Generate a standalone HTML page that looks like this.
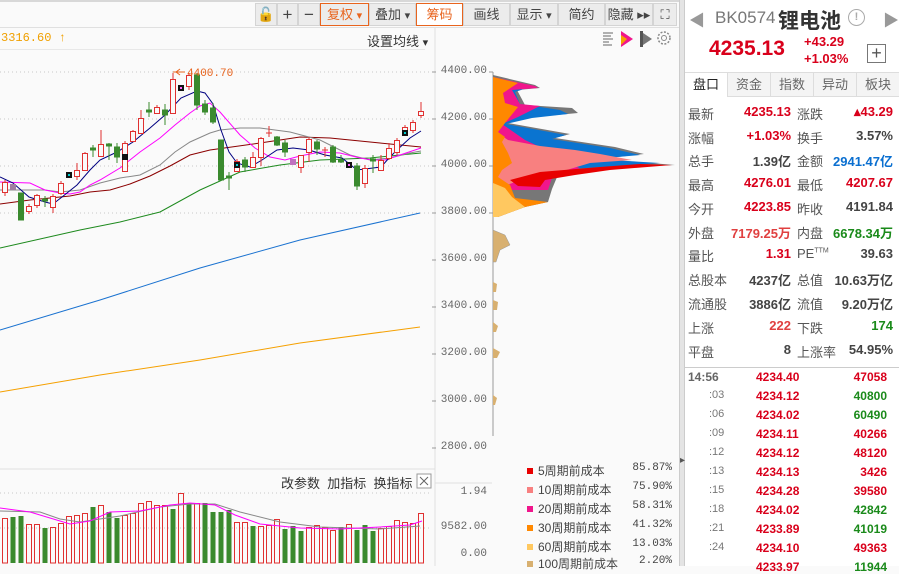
<!DOCTYPE html>
<html><head><meta charset="utf-8"><style>
*{margin:0;padding:0;box-sizing:border-box}
body{width:899px;height:566px;overflow:hidden;background:#fafafa;font-family:"Liberation Sans","Noto Sans CJK SC",sans-serif;position:relative}
.a{position:absolute;white-space:nowrap}
.btn{position:absolute;top:3px;height:23px;background:#ececec;border:1px solid #d4d4d4;font-size:13px;color:#444;text-align:center;line-height:21px}
.or{border:1px solid #e8641e}
.lab{position:absolute;font-size:13px;color:#555}
.val{position:absolute;font-size:13px;font-weight:bold;text-align:right}
.r{color:#d9001b}.g{color:#1a8a1a}.k{color:#444}.b{color:#0a6fd0}
.ax{position:absolute;font-family:"Liberation Mono",monospace;font-size:11px;color:#666;text-align:right;width:52px;left:435px}
.tk{position:absolute;font-size:12px;font-weight:bold}
.leg{position:absolute;left:527px;font-size:12px;color:#444;width:145px}
.leg i{display:inline-block;width:6px;height:6px;margin:0 5px 1px 0}
.leg span{position:absolute;right:0;font-family:"Liberation Mono",monospace;font-size:11px}
</style></head><body>
<div class="a" style="left:0;top:0;width:680px;height:2px;background:#d8d8d8"></div>
<div class="a" style="left:0;top:27px;width:680px;height:1px;background:#e0e0e0"></div>
<div class="btn" style="left:255px;width:22px;font-size:14px">&#128275;</div>
<div class="btn" style="left:277px;width:21px;font-size:17px">+</div>
<div class="btn" style="left:298px;width:22px;font-size:17px">−</div>
<div class="btn or" style="left:320px;width:49px;color:#e8641e">复权 <small>▾</small></div>
<div class="btn" style="left:369px;width:47px">叠加 <small>▾</small></div>
<div class="btn or" style="left:416px;width:47px;color:#e8641e;background:#fff">筹码</div>
<div class="btn" style="left:463px;width:47px">画线</div>
<div class="btn" style="left:510px;width:48px">显示 <small>▾</small></div>
<div class="btn" style="left:558px;width:47px">简约</div>
<div class="btn" style="left:605px;width:48px">隐藏 ▸▸</div>
<div class="btn" style="left:653px;width:24px">⛶</div>

<div class="a" style="left:1px;top:31px;font-size:12px;color:#f0a000;font-family:'Liberation Mono',monospace">3316.60 ↑</div>
<div class="a" style="left:367px;top:31px;font-size:13px;color:#333">设置均线 <small>▾</small></div>
<div class="a" style="left:0;top:49px;width:425px;height:1px;background:#e8e8e8"></div>

<svg class="a" style="left:0;top:0" width="680" height="566">
<g stroke="#c8c8c8" stroke-dasharray="1,3">
<line x1="0" y1="72" x2="432" y2="72"/><line x1="0" y1="119" x2="432" y2="119"/><line x1="0" y1="166" x2="432" y2="166"/><line x1="0" y1="213" x2="432" y2="213"/>
<line x1="0" y1="493" x2="432" y2="493"/><line x1="0" y1="528" x2="432" y2="528"/></g>
<line x1="435" y1="28" x2="435" y2="566" stroke="#e0e0e0"/>
<line x1="0" y1="469" x2="435" y2="469" stroke="#e0e0e0"/>
<line x1="435" y1="483" x2="492" y2="483" stroke="#e0e0e0"/>
<g stroke="#999"><line x1="432" y1="72" x2="436" y2="72"/><line x1="432" y1="119" x2="436" y2="119"/><line x1="432" y1="166" x2="436" y2="166"/><line x1="432" y1="213" x2="436" y2="213"/><line x1="432" y1="260" x2="436" y2="260"/><line x1="432" y1="307" x2="436" y2="307"/><line x1="432" y1="354" x2="436" y2="354"/><line x1="432" y1="401" x2="436" y2="401"/><line x1="432" y1="448" x2="436" y2="448"/></g>
<g fill="none" stroke-width="1">
<polyline stroke="#f5a000" points="0,392 100,375 200,360 300,343 420,327"/>
<polyline stroke="#1a72d0" points="0,330 100,300 200,268 300,240 420,213"/>
<polyline stroke="#1e8a1e" points="0,248 80,230 120,222 160,212 200,190 240,172 280,165 320,160 370,158 400,155 421,153"/>
<polyline stroke="#8b0000" points="0,204 30,200 50,198 70,196 90,192 110,190 130,184 150,176 170,166 190,155 210,150 260,143 300,137 330,138 380,143 421,147"/>
<polyline stroke="#888" points="0,190 45,190 60,192 80,190 100,183 120,178 140,175 160,165 175,152 190,142 210,133 220,130 240,128 260,128 290,132 320,140 350,155 370,160 390,158 410,153 421,151"/>
<polyline stroke="#f0f" points="0,182 30,183 45,190 60,193 70,194 80,192 90,185 100,180 120,168 140,152 160,138 175,125 190,113 200,106 210,103 220,112 240,135 255,148 270,157 285,160 300,156 320,152 340,153 360,158 372,160 385,160 400,155 421,148"/>
<polyline stroke="#000080" points="0,177 13,183 29,197 45,202 53,204 62,197 77,185 90,170 100,160 117,152 133,142 150,128 165,115 181,98 197,91 205,93 213,104 221,130 229,152 237,163 250,167 262,160 277,150 293,148 309,150 325,155 342,158 357,170 373,168 381,167 389,158 397,150 410,138 421,131"/>
</g>
<g stroke="#e03030" fill="none">
<line x1="5" y1="180" x2="5" y2="196"/><rect x="2.5" y="182.5" width="5" height="10" fill="#fafafa"/>
<line x1="29" y1="204" x2="29" y2="214"/><rect x="26.5" y="206.5" width="5" height="5" fill="#fafafa"/>
<line x1="37" y1="194" x2="37" y2="208"/><rect x="34.5" y="195.5" width="5" height="10" fill="#fafafa"/>
<line x1="53" y1="194" x2="53" y2="213"/><rect x="50.5" y="196.5" width="5" height="11" fill="#fafafa"/>
<line x1="61" y1="181" x2="61" y2="195"/><rect x="58.5" y="183.5" width="5" height="10" fill="#fafafa"/>
<line x1="77" y1="163" x2="77" y2="180"/><rect x="74.5" y="170.5" width="5" height="6" fill="#fafafa"/>
<line x1="85" y1="152" x2="85" y2="170"/><rect x="82.5" y="153.5" width="5" height="17" fill="#fafafa"/>
<line x1="101" y1="130" x2="101" y2="157"/><rect x="98.5" y="144.5" width="5" height="12" fill="#fafafa"/>
<line x1="125" y1="141" x2="125" y2="171"/><rect x="122.5" y="143.5" width="5" height="28" fill="#fafafa"/>
<line x1="133" y1="130" x2="133" y2="142"/><rect x="130.5" y="131.5" width="5" height="10" fill="#fafafa"/>
<line x1="141" y1="110" x2="141" y2="133"/><rect x="138.5" y="118.5" width="5" height="15" fill="#fafafa"/>
<line x1="157" y1="105" x2="157" y2="113"/><rect x="154.5" y="107.5" width="5" height="6" fill="#fafafa"/>
<line x1="173" y1="73" x2="173" y2="113"/><rect x="170.5" y="79.5" width="5" height="34" fill="#fafafa"/>
<line x1="189" y1="73" x2="189" y2="90"/><rect x="186.5" y="75.5" width="5" height="11" fill="#fafafa"/>
<line x1="237" y1="159" x2="237" y2="171"/><rect x="234.5" y="161.5" width="5" height="10" fill="#fafafa"/>
<line x1="253" y1="152" x2="253" y2="168"/><rect x="250.5" y="157.5" width="5" height="10" fill="#fafafa"/>
<line x1="261" y1="137" x2="261" y2="166"/><rect x="258.5" y="138.5" width="5" height="19" fill="#fafafa"/>
<line x1="269" y1="126" x2="269" y2="137"/><line x1="266" y1="133" x2="272" y2="133"/>
<line x1="301" y1="155" x2="301" y2="173"/><rect x="298.5" y="155.5" width="5" height="12" fill="#fafafa"/>
<line x1="309" y1="137" x2="309" y2="162"/><rect x="306.5" y="139.5" width="5" height="13" fill="#fafafa"/>
<line x1="325" y1="147" x2="325" y2="157"/><line x1="322" y1="150" x2="328" y2="150"/>
<line x1="365" y1="165" x2="365" y2="188"/><rect x="362.5" y="168.5" width="5" height="15" fill="#fafafa"/>
<line x1="381" y1="155" x2="381" y2="171"/><rect x="378.5" y="160.5" width="5" height="10" fill="#fafafa"/>
<line x1="389" y1="143" x2="389" y2="160"/><rect x="386.5" y="148.5" width="5" height="10" fill="#fafafa"/>
<line x1="397" y1="138" x2="397" y2="155"/><rect x="394.5" y="140.5" width="5" height="12" fill="#fafafa"/>
<line x1="405" y1="125" x2="405" y2="136"/><rect x="402.5" y="127.5" width="5" height="8" fill="#fafafa"/>
<line x1="413" y1="120" x2="413" y2="133"/><rect x="410.5" y="122.5" width="5" height="8" fill="#fafafa"/>
<line x1="421" y1="102" x2="421" y2="118"/><rect x="418.5" y="111.5" width="5" height="4" fill="#fafafa"/>
</g>
<g stroke="#3a8a2e" fill="#3a8a2e">
<rect x="18.5" y="193" width="5" height="27"/>
<line x1="45" y1="196" x2="45" y2="207"/><rect x="42.5" y="199" width="5" height="2"/>
<line x1="93" y1="145" x2="93" y2="157"/><rect x="90.5" y="148" width="5" height="2"/>
<line x1="109" y1="143" x2="109" y2="160"/><rect x="106.5" y="144" width="5" height="2"/>
<line x1="117" y1="143" x2="117" y2="163"/><rect x="114.5" y="147" width="5" height="10"/>
<line x1="149" y1="102" x2="149" y2="117"/><rect x="146.5" y="110" width="5" height="2"/>
<line x1="165" y1="104" x2="165" y2="125"/><rect x="162.5" y="110" width="5" height="5"/>
<line x1="197" y1="73" x2="197" y2="110"/><rect x="194.5" y="75" width="5" height="30"/>
<line x1="205" y1="100" x2="205" y2="115"/><rect x="202.5" y="104" width="5" height="8"/>
<line x1="213" y1="103" x2="213" y2="124"/><rect x="210.5" y="108" width="5" height="14"/>
<rect x="218.5" y="140" width="5" height="40"/>
<line x1="229" y1="172" x2="229" y2="190"/><rect x="226.5" y="176" width="5" height="2"/>
<line x1="245" y1="157" x2="245" y2="172"/><rect x="242.5" y="160" width="5" height="7"/>
<line x1="277" y1="136" x2="277" y2="146"/><rect x="274.5" y="137" width="5" height="8"/>
<line x1="285" y1="140" x2="285" y2="157"/><rect x="282.5" y="143" width="5" height="9"/>
<line x1="317" y1="140" x2="317" y2="155"/><rect x="314.5" y="142" width="5" height="7"/>
<line x1="333" y1="145" x2="333" y2="163"/><rect x="330.5" y="147" width="5" height="15"/>
<line x1="341" y1="155" x2="341" y2="163"/><rect x="338.5" y="160" width="5" height="2"/>
<line x1="357" y1="163" x2="357" y2="190"/><rect x="354.5" y="166" width="5" height="20"/>
<line x1="373" y1="155" x2="373" y2="173"/><rect x="370.5" y="159" width="5" height="2"/>
</g>
<rect x="10" y="184" width="6" height="6" fill="#a080a0"/>
<rect x="66" y="172" width="6" height="6" fill="#111"/><rect x="68" y="174" width="2" height="2" fill="#0cc"/>
<rect x="122" y="154" width="6" height="6" fill="#111"/>
<rect x="178" y="85" width="6" height="6" fill="#111"/><rect x="180" y="87" width="2" height="2" fill="#f6f"/>
<rect x="234" y="162" width="6" height="6" fill="#111"/><rect x="236" y="164" width="2" height="2" fill="#0cc"/>
<rect x="290" y="159" width="6" height="6" fill="#c070c0"/>
<rect x="346" y="162" width="6" height="6" fill="#111"/><rect x="348" y="164" width="2" height="2" fill="#f6f"/>
<rect x="402" y="130" width="6" height="6" fill="#111"/><rect x="404" y="132" width="2" height="2" fill="#0cc"/>
<line x1="173" y1="72" x2="185" y2="72" stroke="#e8641e"/><path d="M180,69 L176,72 L180,75" fill="none" stroke="#e8641e"/>
<text x="187" y="76" font-family="Liberation Mono,monospace" font-size="11" fill="#e8641e">4400.70</text>
<!-- volume -->
<g>
<rect x="2.5" y="518.5" width="5" height="44.5" fill="none" stroke="#e03030"/><rect x="10.5" y="517" width="5" height="46" fill="#3a8a2e"/><rect x="18.5" y="516" width="5" height="47" fill="#3a8a2e"/><rect x="26.5" y="524.5" width="5" height="38.5" fill="none" stroke="#e03030"/><rect x="34.5" y="524.5" width="5" height="38.5" fill="none" stroke="#e03030"/><rect x="42.5" y="528" width="5" height="35" fill="#3a8a2e"/><rect x="50.5" y="527.5" width="5" height="35.5" fill="none" stroke="#e03030"/><rect x="58.5" y="523.5" width="5" height="39.5" fill="none" stroke="#e03030"/><rect x="66.5" y="516.5" width="5" height="46.5" fill="none" stroke="#e03030"/><rect x="74.5" y="515.5" width="5" height="47.5" fill="none" stroke="#e03030"/><rect x="82.5" y="513.5" width="5" height="49.5" fill="none" stroke="#e03030"/><rect x="90.5" y="507" width="5" height="56" fill="#3a8a2e"/><rect x="98.5" y="505.5" width="5" height="57.5" fill="none" stroke="#e03030"/><rect x="106.5" y="512" width="5" height="51" fill="#3a8a2e"/><rect x="114.5" y="518" width="5" height="45" fill="#3a8a2e"/><rect x="122.5" y="515.5" width="5" height="47.5" fill="none" stroke="#e03030"/><rect x="130.5" y="513.5" width="5" height="49.5" fill="none" stroke="#e03030"/><rect x="138.5" y="503.5" width="5" height="59.5" fill="none" stroke="#e03030"/><rect x="146.5" y="501.5" width="5" height="61.5" fill="none" stroke="#e03030"/><rect x="154.5" y="505.5" width="5" height="57.5" fill="none" stroke="#e03030"/><rect x="162.5" y="505.5" width="5" height="57.5" fill="none" stroke="#e03030"/><rect x="170.5" y="509" width="5" height="54" fill="#3a8a2e"/><rect x="170.5" y="493.5" width="5" height="69.5" fill="none" stroke="#e03030" transform="translate(8 0)"/><rect x="186.5" y="503" width="5" height="60" fill="#3a8a2e"/><rect x="194.5" y="503.5" width="5" height="59.5" fill="none" stroke="#e03030"/><rect x="202.5" y="503" width="5" height="60" fill="#3a8a2e"/><rect x="210.5" y="512" width="5" height="51" fill="#3a8a2e"/><rect x="218.5" y="512" width="5" height="51" fill="#3a8a2e"/><rect x="226.5" y="510" width="5" height="53" fill="#3a8a2e"/><rect x="234.5" y="522.5" width="5" height="40.5" fill="none" stroke="#e03030"/><rect x="242.5" y="522.5" width="5" height="40.5" fill="none" stroke="#e03030"/><rect x="250.5" y="526" width="5" height="37" fill="#3a8a2e"/><rect x="258.5" y="526.5" width="5" height="36.5" fill="none" stroke="#e03030"/><rect x="266.5" y="525.5" width="5" height="37.5" fill="none" stroke="#e03030"/><rect x="274.5" y="519.5" width="5" height="43.5" fill="none" stroke="#e03030"/><rect x="282.5" y="529" width="5" height="34" fill="#3a8a2e"/><rect x="290.5" y="526" width="5" height="37" fill="#3a8a2e"/><rect x="298.5" y="531" width="5" height="32" fill="#3a8a2e"/><rect x="306.5" y="527.5" width="5" height="35.5" fill="none" stroke="#e03030"/><rect x="314.5" y="525.5" width="5" height="37.5" fill="none" stroke="#e03030"/><rect x="322.5" y="527.5" width="5" height="35.5" fill="none" stroke="#e03030"/><rect x="330.5" y="530.5" width="5" height="32.5" fill="none" stroke="#e03030"/><rect x="338.5" y="527" width="5" height="36" fill="#3a8a2e"/><rect x="346.5" y="524.5" width="5" height="38.5" fill="none" stroke="#e03030"/><rect x="354.5" y="530" width="5" height="33" fill="#3a8a2e"/><rect x="362.5" y="525" width="5" height="38" fill="#3a8a2e"/><rect x="370.5" y="531" width="5" height="32" fill="#3a8a2e"/><rect x="378.5" y="528.5" width="5" height="34.5" fill="none" stroke="#e03030"/><rect x="386.5" y="526.5" width="5" height="36.5" fill="none" stroke="#e03030"/><rect x="394.5" y="520.5" width="5" height="42.5" fill="none" stroke="#e03030"/><rect x="402.5" y="522.5" width="5" height="40.5" fill="none" stroke="#e03030"/><rect x="410.5" y="523.5" width="5" height="39.5" fill="none" stroke="#e03030"/><rect x="418.5" y="513.5" width="5" height="49.5" fill="none" stroke="#e03030"/>
</g>
<polyline fill="none" stroke="#888" points="0,511 40,512 60,519 80,522 120,516 160,507 190,504 215,504 240,512 280,522 320,527 380,529 420,526"/>
<polyline fill="none" stroke="#f0f" points="0,508 30,512 60,521 70,524 90,521 110,512 140,511 170,505 190,503 215,505 235,515 260,524 300,528 340,529 380,527 410,525 422,521"/>
<!-- chip distribution -->
<line x1="493" y1="72" x2="493" y2="436" stroke="#999"/>
<line x1="489" y1="72" x2="493" y2="72" stroke="#999"/><line x1="489" y1="119" x2="493" y2="119" stroke="#999"/><line x1="489" y1="166" x2="493" y2="166" stroke="#999"/><line x1="489" y1="213" x2="493" y2="213" stroke="#999"/>
<polygon fill="#777" points="493,75 535,85 540,88 517,90 525,105 572,108 578,113 535,117 508,123 570,134 555,138 615,147 644,154 600,159 675,165 560,170 552,189 548,202 525,207 498,217 493,217"/>
<polygon fill="#0a74d0" points="493,78 530,87 515,92 520,104 560,110 568,114 532,118 506,124 566,135 552,139 610,148 640,155 595,159 660,163 555,170 548,189 493,189"/>
<polygon fill="#f0168c" points="493,77 535,86 538,88 512,90 520,104 540,106 518,117 502,124 525,140 540,147 520,152 550,158 580,168 552,178 548,190 493,190"/>
<polygon fill="#f88080" points="493,130 508,140 540,146 575,150 600,154 632,160 590,163 560,172 520,180 500,188 493,190"/>
<polygon fill="#e80000" points="510,180 540,172 600,167 640,164 672,165 610,170 575,175 545,180 540,187 518,186"/>
<polygon fill="#ff8800" points="493,77 518,83 503,93 505,103 518,107 505,123 498,132 505,137 502,142 508,153 512,163 502,170 498,177 510,185 515,198 548,202 525,207 498,217 493,217"/>
<polygon fill="#ffc860" points="493,183 505,188 512,197 525,207 498,217 493,217"/>
<polygon fill="#d8b070" stroke="#999" stroke-width=".5" points="493,230 505,235 510,245 500,250 496,262 493,262"/>
<polygon fill="#d8b070" points="493,282 497,284 496,292 493,292"/>
<polygon fill="#d8b070" points="493,300 498,302 497,310 493,310"/>
<polygon fill="#d8b070" points="493,322 498,326 496,332 493,332"/>
<polygon fill="#d8b070" points="493,348 500,352 497,358 493,358"/>
<polygon fill="#d8b070" points="493,395 497,398 495,405 493,405"/>
<!-- icons -->
<g stroke="#666"><line x1="603" y1="33" x2="613" y2="33"/><line x1="603" y1="36" x2="611" y2="36"/><line x1="603" y1="39" x2="613" y2="39"/><line x1="603" y1="42" x2="609" y2="42"/><line x1="603" y1="45" x2="612" y2="45"/></g>
<polygon points="621,31 633,39 621,47" fill="#f0168c"/><polygon points="621,35 627,39 621,45" fill="#f5a000"/>
<polygon points="640,31 652,39 640,47" fill="#777"/><rect x="640" y="31" width="3" height="16" fill="#555"/>
<circle cx="664" cy="38" r="6" fill="none" stroke="#888" stroke-width="1.5" stroke-dasharray="2,1.5"/><circle cx="664" cy="38" r="2.5" fill="none" stroke="#888"/>
<rect x="417" y="474" width="14" height="14" fill="#fff" stroke="#999"/><path d="M420,477 L428,485 M428,477 L420,485" stroke="#666"/>
</svg>

<div class="ax" style="top:65px">4400.00</div><div class="ax" style="top:112px">4200.00</div><div class="ax" style="top:159px">4000.00</div><div class="ax" style="top:206px">3800.00</div><div class="ax" style="top:253px">3600.00</div><div class="ax" style="top:300px">3400.00</div><div class="ax" style="top:347px">3200.00</div><div class="ax" style="top:394px">3000.00</div><div class="ax" style="top:441px">2800.00</div>
<div class="ax" style="top:486px">1.94</div><div class="ax" style="top:521px">9582.00</div><div class="ax" style="top:548px">0.00</div>
<div class="a" style="left:281px;top:473px;font-size:13px;color:#333">改参数&nbsp; 加指标&nbsp; 换指标</div>

<div class="leg" style="top:462px"><i style="background:#e80000"></i>5周期前成本<span>85.87%</span></div>
<div class="leg" style="top:481px"><i style="background:#f88080"></i>10周期前成本<span>75.90%</span></div>
<div class="leg" style="top:500px"><i style="background:#f0168c"></i>20周期前成本<span>58.31%</span></div>
<div class="leg" style="top:519px"><i style="background:#ff8800"></i>30周期前成本<span>41.32%</span></div>
<div class="leg" style="top:538px"><i style="background:#ffc860"></i>60周期前成本<span>13.03%</span></div>
<div class="leg" style="top:555px"><i style="background:#d8b070"></i>100周期前成本<span>2.20%</span></div>

<!-- splitter -->
<div class="a" style="left:679px;top:0;width:6px;height:566px;background:#e4e4e4;border-left:1px solid #ccc;border-right:1px solid #ccc"></div>
<div class="a" style="left:680px;top:455px;font-size:10px;color:#555">▸</div>

<!-- right panel -->
<div class="a" style="left:685px;top:0;width:214px;height:566px;background:#fff"></div>
<div class="a" style="left:689px;top:7px;font-size:16px;color:#999">◀</div>
<div class="a" style="left:715px;top:8px;font-size:17px;color:#777">BK0574</div>
<div class="a" style="left:778px;top:5px;font-size:21px;font-weight:bold;color:#333">锂电池</div>
<div class="a" style="left:848px;top:9px;width:17px;height:17px;border:1.5px solid #aaa;border-radius:50%;font-size:11px;color:#aaa;text-align:center;line-height:14px;font-weight:bold">!</div>
<div class="a" style="left:883px;top:7px;font-size:16px;color:#999">▶</div>
<div class="a r" style="left:709px;top:37px;font-size:21px;font-weight:bold">4235.13</div>
<div class="a r" style="left:804px;top:34px;font-size:13px;font-weight:bold">+43.29</div>
<div class="a r" style="left:804px;top:51px;font-size:13px;font-weight:bold">+1.03%</div>
<div class="a" style="left:867px;top:44px;width:19px;height:19px;border:1px solid #777;text-align:center;line-height:16px;font-size:18px;color:#555">+</div>
<div class="a" style="left:685px;top:72px;width:214px;height:25px;border-top:1px solid #ddd;border-bottom:1px solid #ddd;background:#f4f4f4"></div>
<div class="a" style="left:685px;top:73px;width:43px;height:24px;background:#fff;border-right:1px solid #ddd;font-size:13px;text-align:center;line-height:24px;color:#222">盘口</div>
<div class="a" style="left:728px;top:73px;width:43px;height:23px;border-right:1px solid #ddd;font-size:13px;text-align:center;line-height:23px;color:#666">资金</div>
<div class="a" style="left:771px;top:73px;width:43px;height:23px;border-right:1px solid #ddd;font-size:13px;text-align:center;line-height:23px;color:#666">指数</div>
<div class="a" style="left:814px;top:73px;width:43px;height:23px;border-right:1px solid #ddd;font-size:13px;text-align:center;line-height:23px;color:#666">异动</div>
<div class="a" style="left:857px;top:73px;width:42px;height:23px;font-size:13px;text-align:center;line-height:23px;color:#666">板块</div>

<div class="lab" style="left:688px;top:104px">最新</div><div class="val r" style="right:108px;top:104px">4235.13</div><div class="lab" style="left:797px;top:104px">涨跌</div><div class="val r" style="right:6px;top:104px">▴43.29</div>
<div class="lab" style="left:688px;top:128px">涨幅</div><div class="val r" style="right:108px;top:128px">+1.03%</div><div class="lab" style="left:797px;top:128px">换手</div><div class="val k" style="right:6px;top:128px">3.57%</div>
<div class="lab" style="left:688px;top:151px">总手</div><div class="val k" style="right:108px;top:151px">1.39亿</div><div class="lab" style="left:797px;top:151px">金额</div><div class="val b" style="right:6px;top:151px">2941.47亿</div>
<div class="lab" style="left:688px;top:175px">最高</div><div class="val r" style="right:108px;top:175px">4276.01</div><div class="lab" style="left:797px;top:175px">最低</div><div class="val r" style="right:6px;top:175px">4207.67</div>
<div class="lab" style="left:688px;top:199px">今开</div><div class="val r" style="right:108px;top:199px">4223.85</div><div class="lab" style="left:797px;top:199px">昨收</div><div class="val k" style="right:6px;top:199px">4191.84</div>
<div class="lab" style="left:688px;top:223px">外盘</div><div class="val" style="right:108px;top:223px;color:#e04040">7179.25万</div><div class="lab" style="left:797px;top:223px">内盘</div><div class="val g" style="right:6px;top:223px">6678.34万</div>
<div class="lab" style="left:688px;top:246px">量比</div><div class="val r" style="right:108px;top:246px">1.31</div><div class="lab" style="left:797px;top:246px">PE<sup style="font-size:7px">TTM</sup></div><div class="val k" style="right:6px;top:246px">39.63</div>
<div class="lab" style="left:688px;top:270px">总股本</div><div class="val k" style="right:108px;top:270px">4237亿</div><div class="lab" style="left:797px;top:270px">总值</div><div class="val k" style="right:6px;top:270px">10.63万亿</div>
<div class="lab" style="left:688px;top:294px">流通股</div><div class="val k" style="right:108px;top:294px">3886亿</div><div class="lab" style="left:797px;top:294px">流值</div><div class="val k" style="right:6px;top:294px">9.20万亿</div>
<div class="lab" style="left:688px;top:318px">上涨</div><div class="val" style="right:108px;top:318px;color:#e04040">222</div><div class="lab" style="left:797px;top:318px">下跌</div><div class="val g" style="right:6px;top:318px">174</div>
<div class="lab" style="left:688px;top:342px">平盘</div><div class="val k" style="right:108px;top:342px">8</div><div class="lab" style="left:797px;top:342px">上涨率</div><div class="val k" style="right:6px;top:342px">54.95%</div>
<div class="a" style="left:685px;top:367px;width:214px;height:1px;background:#ccc"></div>

<div class="tk" style="left:688px;top:370px;color:#666">14:56</div><div class="tk r" style="left:756px;top:370px">4234.40</div><div class="tk r" style="right:12px;top:370px">47058</div>
<div class="tk" style="left:709px;top:389px;color:#777;font-weight:normal;font-size:11px">:03</div><div class="tk r" style="left:756px;top:389px">4234.12</div><div class="tk g" style="right:12px;top:389px">40800</div>
<div class="tk" style="left:709px;top:408px;color:#777;font-weight:normal;font-size:11px">:06</div><div class="tk r" style="left:756px;top:408px">4234.02</div><div class="tk g" style="right:12px;top:408px">60490</div>
<div class="tk" style="left:709px;top:427px;color:#777;font-weight:normal;font-size:11px">:09</div><div class="tk r" style="left:756px;top:427px">4234.11</div><div class="tk r" style="right:12px;top:427px">40266</div>
<div class="tk" style="left:709px;top:446px;color:#777;font-weight:normal;font-size:11px">:12</div><div class="tk r" style="left:756px;top:446px">4234.12</div><div class="tk r" style="right:12px;top:446px">48120</div>
<div class="tk" style="left:709px;top:465px;color:#777;font-weight:normal;font-size:11px">:13</div><div class="tk r" style="left:756px;top:465px">4234.13</div><div class="tk r" style="right:12px;top:465px">3426</div>
<div class="tk" style="left:709px;top:484px;color:#777;font-weight:normal;font-size:11px">:15</div><div class="tk r" style="left:756px;top:484px">4234.28</div><div class="tk r" style="right:12px;top:484px">39580</div>
<div class="tk" style="left:709px;top:503px;color:#777;font-weight:normal;font-size:11px">:18</div><div class="tk r" style="left:756px;top:503px">4234.02</div><div class="tk g" style="right:12px;top:503px">42842</div>
<div class="tk" style="left:709px;top:522px;color:#777;font-weight:normal;font-size:11px">:21</div><div class="tk r" style="left:756px;top:522px">4233.89</div><div class="tk g" style="right:12px;top:522px">41019</div>
<div class="tk" style="left:709px;top:541px;color:#777;font-weight:normal;font-size:11px">:24</div><div class="tk r" style="left:756px;top:541px">4234.10</div><div class="tk r" style="right:12px;top:541px">49363</div>
<div class="tk r" style="left:756px;top:560px">4233.97</div><div class="tk g" style="right:12px;top:560px">11944</div>
</body></html>
